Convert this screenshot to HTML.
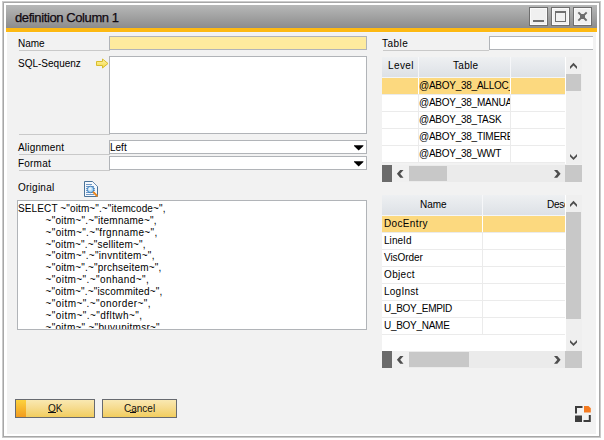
<!DOCTYPE html>
<html><head><meta charset="utf-8">
<style>
*{margin:0;padding:0;box-sizing:border-box}
html,body{width:604px;height:440px;overflow:hidden;background:#fff;font-family:"Liberation Sans",sans-serif;color:#000}
.a{position:absolute}
.t{position:absolute;white-space:pre;line-height:12px;font-size:10px}
#frame{left:2px;top:1px;width:599px;height:437px;border:1px solid #cbcbcb;box-shadow:inset 0 0 0 1px #a7a7a7}
#title{left:6px;top:5px;width:591px;height:23px;background:linear-gradient(#b7b8b8,#8e8e8e);border-bottom:1px solid #8a8c91}
#orange{left:6px;top:28px;width:591px;height:4px;background:#fdb913}
#content{left:7px;top:32px;width:589px;height:402px;background:#f2f2f2;border-top:1px solid #f1f5fb}
.tbtn{top:7px;width:19px;height:19px;border:1px solid #6e6e6e;background:#f0f0f0;box-shadow:inset 0 0 0 1px #fafafa}
.sep{height:1px;background:#c9c9c9}
.fld{border:1px solid #b1b4b8;background:#fff}
.gh{background:linear-gradient(#eef0f2,#dde1e6)}
.sel{background:#fcd97f}
.gl{background:#ebebeb}
.sb{background:#efefef}
.thumb{background:#c8c8c8}
</style></head><body>
<div class="a" id="frame"></div>
<div class="a" id="title"></div>
<div class="t" style="left:15px;top:10px;font-size:13px;line-height:16px;letter-spacing:-0.4px;color:#100810;-webkit-text-stroke:0.25px #100810">definition Column 1</div>
<!-- title buttons -->
<div class="a tbtn" style="left:529px"></div>
<div class="a" style="left:533px;top:20px;width:11px;height:2px;background:#6e6e6e"></div>
<div class="a tbtn" style="left:551px"></div>
<div class="a" style="left:555px;top:11px;width:11px;height:11px;border:1px solid #6e6e6e;border-top-width:2px"></div>
<div class="a tbtn" style="left:573px"></div>
<svg class="a" style="left:573px;top:7px" width="19" height="19" viewBox="0 0 19 19">
<path d="M6 6 L13 13 M13 6 L6 13" stroke="#6e6e6e" stroke-width="1.9" stroke-linecap="square"/>
<rect x="7" y="7" width="5" height="5" fill="#6e6e6e"/>
</svg>
<div class="a" id="orange"></div>
<div class="a" id="content"></div>

<!-- left labels -->
<div class="t" style="left:18px;top:38px">Name</div>
<div class="a sep" style="left:19px;top:50px;width:91px"></div>
<div class="a fld" style="left:109px;top:36px;width:258px;height:14px;background:#feeb9e"></div>

<div class="t" style="left:18px;top:58px">SQL-Sequenz</div>
<div class="a fld" style="left:109px;top:56px;width:258px;height:78px"></div>
<div class="a sep" style="left:19px;top:134px;width:91px"></div>

<div class="t" style="left:18px;top:142px;letter-spacing:0.2px">Alignment</div>
<div class="a fld" style="left:109px;top:140px;width:258px;height:14px"></div>
<div class="t" style="left:110px;top:142px">Left</div>
<div class="a sep" style="left:19px;top:154px;width:91px"></div>

<div class="t" style="left:18px;top:158px;letter-spacing:0.2px">Format</div>
<div class="a fld" style="left:109px;top:156px;width:258px;height:14px"></div>
<div class="a sep" style="left:19px;top:170px;width:91px"></div>

<div class="t" style="left:18px;top:182px;letter-spacing:0.25px">Original</div>

<div class="a fld" style="left:17px;top:200px;width:350px;height:130px"></div>
<!-- ORIG -->
<div class="a" style="left:18px;top:201px;width:348px;height:128px;overflow:hidden">
<div class="t" style="left:0;top:2px;letter-spacing:0.12px">SELECT ~"oitm~".~"itemcode~",</div>
<div class="t" style="left:27.6px;top:13.85px;letter-spacing:0.24px">~"oitm~".~"itemname~",</div>
<div class="t" style="left:27.6px;top:25.70px;letter-spacing:0.35px">~"oitm~".~"frgnname~",</div>
<div class="t" style="left:27.6px;top:37.55px;letter-spacing:0.19px">~"oitm~".~"sellitem~",</div>
<div class="t" style="left:27.6px;top:49.40px;letter-spacing:0.31px">~"oitm~".~"invntitem~",</div>
<div class="t" style="left:27.6px;top:61.25px;letter-spacing:0.21px">~"oitm~".~"prchseitem~",</div>
<div class="t" style="left:27.6px;top:73.10px;letter-spacing:0.41px">~"oitm~".~"onhand~",</div>
<div class="t" style="left:27.6px;top:84.95px;letter-spacing:0.18px">~"oitm~".~"iscommited~",</div>
<div class="t" style="left:27.6px;top:96.80px;letter-spacing:0.42px">~"oitm~".~"onorder~",</div>
<div class="t" style="left:27.6px;top:108.65px;letter-spacing:0.44px">~"oitm~".~"dfltwh~",</div>
<div class="t" style="left:27.6px;top:120.50px;letter-spacing:0.27px">~"oitm~".~"buyunitmsr~",</div>
</div>
<!-- /ORIG -->

<!-- right top -->
<div class="t" style="left:382px;top:38px;letter-spacing:0.45px">Table</div>
<div class="a sep" style="left:383px;top:50px;width:106px"></div>
<div class="a fld" style="left:489px;top:36px;width:104px;height:14px;border-right:none"></div>

<!-- GRIDS -->
<!-- grid 1 -->
<div class="a gh" style="left:382px;top:57px;width:183px;height:20px"></div>
<div class="a" style="left:382px;top:77px;width:183px;height:1px;background:#f4f6f8"></div>
<div class="a" style="left:418px;top:57px;width:1px;height:20px;background:#f6f7f9"></div>
<div class="a" style="left:510px;top:57px;width:1px;height:20px;background:#f6f7f9"></div>
<div class="t" style="left:388px;top:60px;letter-spacing:0.4px">Level</div>
<div class="t" style="left:453px;top:60px;letter-spacing:0.3px">Table</div>
<div class="a" style="left:382px;top:78px;width:183px;height:16px;background:#fcd97f"></div>
<div class="a gl" style="left:382px;top:94px;width:183px;height:1px"></div>
<div class="a" style="left:418px;top:78px;width:1px;height:16px;background:#fff"></div>
<div class="a" style="left:510px;top:78px;width:1px;height:16px;background:#fff"></div>
<div class="a" style="left:419px;top:78px;width:91px;height:16px;overflow:hidden"><div class="t" style="left:0;top:2px;letter-spacing:-0.25px">@ABOY_38_ALLOC_</div></div>
<div class="a" style="left:382px;top:95px;width:183px;height:16px;background:#fff"></div>
<div class="a gl" style="left:382px;top:111px;width:183px;height:1px"></div>
<div class="a" style="left:418px;top:95px;width:1px;height:16px;background:#ebebeb"></div>
<div class="a" style="left:510px;top:95px;width:1px;height:16px;background:#ebebeb"></div>
<div class="a" style="left:419px;top:95px;width:91px;height:16px;overflow:hidden"><div class="t" style="left:0;top:2px;letter-spacing:-0.25px">@ABOY_38_MANUA</div></div>
<div class="a" style="left:382px;top:112px;width:183px;height:16px;background:#fff"></div>
<div class="a gl" style="left:382px;top:128px;width:183px;height:1px"></div>
<div class="a" style="left:418px;top:112px;width:1px;height:16px;background:#ebebeb"></div>
<div class="a" style="left:510px;top:112px;width:1px;height:16px;background:#ebebeb"></div>
<div class="a" style="left:419px;top:112px;width:91px;height:16px;overflow:hidden"><div class="t" style="left:0;top:2px;letter-spacing:-0.25px">@ABOY_38_TASK</div></div>
<div class="a" style="left:382px;top:129px;width:183px;height:16px;background:#fff"></div>
<div class="a gl" style="left:382px;top:145px;width:183px;height:1px"></div>
<div class="a" style="left:418px;top:129px;width:1px;height:16px;background:#ebebeb"></div>
<div class="a" style="left:510px;top:129px;width:1px;height:16px;background:#ebebeb"></div>
<div class="a" style="left:419px;top:129px;width:91px;height:16px;overflow:hidden"><div class="t" style="left:0;top:2px;letter-spacing:-0.25px">@ABOY_38_TIMERE</div></div>
<div class="a" style="left:382px;top:146px;width:183px;height:16px;background:#fff"></div>
<div class="a gl" style="left:382px;top:162px;width:183px;height:1px"></div>
<div class="a" style="left:418px;top:146px;width:1px;height:16px;background:#ebebeb"></div>
<div class="a" style="left:510px;top:146px;width:1px;height:16px;background:#ebebeb"></div>
<div class="a" style="left:419px;top:146px;width:91px;height:16px;overflow:hidden"><div class="t" style="left:0;top:2px;letter-spacing:-0.25px">@ABOY_38_WWT</div></div>
<div class="a sb" style="left:566px;top:57px;width:16px;height:107px"></div>
<svg class="a" style="left:569px;top:62px" width="10" height="9"><polygon points="1,4.4 4.5,0.8 8,4.4 8,6.9 4.5,3.4 1,6.9" fill="#4e4e4e"/></svg>
<div class="a thumb" style="left:566px;top:74px;width:15px;height:17px"></div>
<div class="a" style="left:565px;top:57px;width:1px;height:107px;background:#fff"></div>
<svg class="a" style="left:569px;top:153px" width="10" height="9"><polygon points="1,0.9 4.5,4.4 8,0.9 8,3.4 4.5,7 1,3.4" fill="#4e4e4e"/></svg>
<div class="a" style="left:382px;top:165px;width:183px;height:17px;background:#ebebeb"></div>
<div class="a" style="left:392px;top:165px;width:17px;height:17px;background:#f0f0f0"></div>
<div class="a" style="left:382px;top:165px;width:10px;height:17px;background:#6b6b6b"></div>
<svg class="a" style="left:396px;top:169px" width="9" height="10"><polygon points="4.2,0.9 7.5,0.9 4.2,4.8 7.5,8.7 4.2,8.7 0.9,4.8" fill="#4e4e4e"/></svg>
<div class="a thumb" style="left:409px;top:166px;width:38px;height:15px"></div>
<svg class="a" style="left:553px;top:169px" width="9" height="10"><polygon points="1,0.9 4.3,0.9 7.6,4.8 4.3,8.7 1,8.7 4.3,4.8" fill="#4e4e4e"/></svg>
<div class="a thumb" style="left:565px;top:165px;width:17px;height:17px"></div>
<!-- grid 2 -->
<div class="a gh" style="left:382px;top:195px;width:183px;height:20px"></div>
<div class="a" style="left:382px;top:215px;width:183px;height:1px;background:#f4f6f8"></div>
<div class="a" style="left:482px;top:195px;width:1px;height:20px;background:#f6f7f9"></div>
<div class="t" style="left:420px;top:199px">Name</div>
<div class="a" style="left:540px;top:195px;width:25px;height:20px;overflow:hidden"><div class="t" style="left:7px;top:4px;letter-spacing:-0.3px">Description</div></div>
<div class="a" style="left:382px;top:216px;width:183px;height:16px;background:#fcd97f"></div>
<div class="a gl" style="left:382px;top:232px;width:183px;height:1px"></div>
<div class="a" style="left:482px;top:216px;width:1px;height:16px;background:#fff"></div>
<div class="t" style="left:384px;top:218px;letter-spacing:0.35px">DocEntry</div>
<div class="a" style="left:382px;top:233px;width:183px;height:16px;background:#fff"></div>
<div class="a gl" style="left:382px;top:249px;width:183px;height:1px"></div>
<div class="a" style="left:482px;top:233px;width:1px;height:16px;background:#ebebeb"></div>
<div class="t" style="left:384px;top:235px;letter-spacing:0.05px">LineId</div>
<div class="a" style="left:382px;top:250px;width:183px;height:16px;background:#fff"></div>
<div class="a gl" style="left:382px;top:266px;width:183px;height:1px"></div>
<div class="a" style="left:482px;top:250px;width:1px;height:16px;background:#ebebeb"></div>
<div class="t" style="left:384px;top:252px;letter-spacing:-0.05px">VisOrder</div>
<div class="a" style="left:382px;top:267px;width:183px;height:16px;background:#fff"></div>
<div class="a gl" style="left:382px;top:283px;width:183px;height:1px"></div>
<div class="a" style="left:482px;top:267px;width:1px;height:16px;background:#ebebeb"></div>
<div class="t" style="left:384px;top:269px;letter-spacing:0.35px">Object</div>
<div class="a" style="left:382px;top:284px;width:183px;height:16px;background:#fff"></div>
<div class="a gl" style="left:382px;top:300px;width:183px;height:1px"></div>
<div class="a" style="left:482px;top:284px;width:1px;height:16px;background:#ebebeb"></div>
<div class="t" style="left:384px;top:286px;letter-spacing:0.25px">LogInst</div>
<div class="a" style="left:382px;top:301px;width:183px;height:16px;background:#fff"></div>
<div class="a gl" style="left:382px;top:317px;width:183px;height:1px"></div>
<div class="a" style="left:482px;top:301px;width:1px;height:16px;background:#ebebeb"></div>
<div class="t" style="left:384px;top:303px;letter-spacing:-0.28px">U_BOY_EMPID</div>
<div class="a" style="left:382px;top:318px;width:183px;height:16px;background:#fff"></div>
<div class="a gl" style="left:382px;top:334px;width:183px;height:1px"></div>
<div class="a" style="left:482px;top:318px;width:1px;height:16px;background:#ebebeb"></div>
<div class="t" style="left:384px;top:320px;letter-spacing:-0.28px">U_BOY_NAME</div>
<div class="a" style="left:382px;top:335px;width:183px;height:16px;background:#fff"></div>
<div class="a" style="left:382px;top:351px;width:183px;height:0px"></div>
<div class="a sb" style="left:566px;top:195px;width:16px;height:156px"></div>
<svg class="a" style="left:569px;top:200px" width="10" height="9"><polygon points="1,4.4 4.5,0.8 8,4.4 8,6.9 4.5,3.4 1,6.9" fill="#4e4e4e"/></svg>
<div class="a thumb" style="left:566px;top:212px;width:15px;height:107px"></div>
<div class="a" style="left:565px;top:195px;width:1px;height:156px;background:#fff"></div>
<svg class="a" style="left:569px;top:339px" width="10" height="9"><polygon points="1,0.9 4.5,4.4 8,0.9 8,3.4 4.5,7 1,3.4" fill="#4e4e4e"/></svg>
<div class="a" style="left:382px;top:351px;width:183px;height:17px;background:#ebebeb"></div>
<div class="a" style="left:392px;top:351px;width:17px;height:17px;background:#f0f0f0"></div>
<div class="a" style="left:382px;top:351px;width:10px;height:17px;background:#6b6b6b"></div>
<svg class="a" style="left:396px;top:355px" width="9" height="10"><polygon points="4.2,0.9 7.5,0.9 4.2,4.8 7.5,8.7 4.2,8.7 0.9,4.8" fill="#4e4e4e"/></svg>
<div class="a thumb" style="left:409px;top:352px;width:60px;height:15px"></div>
<svg class="a" style="left:553px;top:355px" width="9" height="10"><polygon points="1,0.9 4.3,0.9 7.6,4.8 4.3,8.7 1,8.7 4.3,4.8" fill="#4e4e4e"/></svg>
<div class="a thumb" style="left:565px;top:351px;width:17px;height:17px"></div>
<!-- /GRIDS -->
<!-- ICONS -->
<svg class="a" style="left:354px;top:145px" width="10" height="6"><polygon points="0,0.2 9.4,0.2 9.4,1 4.7,5.4 0,1" fill="#000"/></svg>
<svg class="a" style="left:354px;top:161px" width="10" height="6"><polygon points="0,0.2 9.4,0.2 9.4,1 4.7,5.4 0,1" fill="#000"/></svg>
<svg class="a" style="left:95px;top:58px" width="15" height="11" viewBox="0 0 15 11">
<defs><linearGradient id="ag" x1="0" y1="0" x2="0" y2="1"><stop offset="0" stop-color="#fff6b0"/><stop offset="1" stop-color="#f2d740"/></linearGradient></defs>
<polygon points="1.5,3.5 7.5,3.5 7.5,1 13,5.5 7.5,10 7.5,7.5 1.5,7.5" fill="url(#ag)" stroke="#d9bd2c" stroke-width="1" stroke-linejoin="round"/>
</svg>
<svg class="a" style="left:83px;top:180px" width="17" height="19" viewBox="0 0 17 19">
<defs><radialGradient id="mg" cx="0.4" cy="0.4" r="0.6"><stop offset="0" stop-color="#ffffff"/><stop offset="1" stop-color="#78b8e6"/></radialGradient></defs>
<path d="M1.5 1.5 H9.5 L14.5 6.5 V16.5 H1.5 Z" fill="#f4f8fc" stroke="#4a7298" stroke-width="1"/>
<path d="M9.5 1.5 L14.5 6.5" stroke="#6d8fb0" stroke-width="1"/>
<path d="M3 4.5 H9 M3 6.5 H11 M3 8.5 H12 M3 10.5 H12 M3 12.5 H12 M3 14.5 H11" stroke="#4f7fb6" stroke-width="0.8"/>
<circle cx="7.6" cy="9.5" r="3.3" fill="url(#mg)" stroke="#3576b6" stroke-width="0.8"/>
<path d="M10.6 12.4 L13.9 15.7" stroke="#e8841c" stroke-width="2" stroke-linecap="round"/>
</svg>
<svg class="a" style="left:574px;top:405px" width="19" height="19" viewBox="0 0 19 19">
<path d="M1 1 H8.5 V3 H3 V8.5 H1 Z" fill="#3d3d3d"/>
<path d="M10 1 H14.5 L16.8 3.3 V7.5 H10 Z" fill="#f47a20"/>
<rect x="1" y="10.5" width="7" height="6.5" fill="#3d3d3d"/>
<path d="M14.8 10 H16.8 V17 H9.5 V15 H14.8 Z" fill="#3d3d3d"/>
</svg>
<!-- /ICONS -->
<!-- buttons -->
<div class="a" style="left:15px;top:399px;width:80px;height:19px;border:1px solid #676a70;background:linear-gradient(#f9e8b2,#f6dc90 45%,#f2ce5e)"></div>
<div class="a" style="left:16px;top:400px;width:10px;height:17px;background:linear-gradient(#fcd23e,#f29c1e)"></div>
<div class="a" style="left:102px;top:399px;width:75px;height:19px;border:1px solid #676a70;background:linear-gradient(#f9e8b2,#f6dc90 45%,#f2ce5e)"></div>
<div class="t" style="left:48px;top:403px;color:#111">OK</div>
<div class="a" style="left:48px;top:412px;width:8px;height:1px;background:#111"></div>
<div class="t" style="left:124px;top:403px;color:#111">Cancel</div>
<div class="a" style="left:130px;top:412px;width:6px;height:1px;background:#111"></div>
</body></html>
